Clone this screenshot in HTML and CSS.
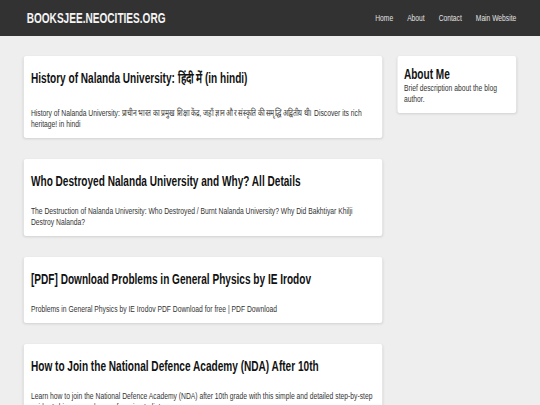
FILE: index.html
```html
<!DOCTYPE html>
<html lang="en">
<head>
  <meta charset="UTF-8" />
  <meta name="viewport" content="width=device-width, initial-scale=1.0"/>
  <title>BooksJEE</title>
  <link rel="stylesheet" href="styles.css">
</head>
<body>
  <header class="site-header">
    <a class="site-title" href="#">BOOKSJEE.NEOCITIES.ORG</a>
    <nav class="site-nav">
      <a href="#">Home</a>
      <a href="#">About</a>
      <a href="#">Contact</a>
      <a href="#">Main Website</a>
    </nav>
  </header>

  <div class="container">
    <main class="posts">
      <article class="post-card">
        <h2>History of Nalanda University: <span lang="hi">हिंदी में</span> (in hindi)</h2>
        <p>History of Nalanda University: <span lang="hi">प्राचीन भारत का प्रमुख शिक्षा केंद्र, जहाँ ज्ञान और संस्कृति की समृद्धि अद्वितीय थी।</span> Discover its rich heritage! in hindi</p>
      </article>
      <article class="post-card">
        <h2>Who Destroyed Nalanda University and Why? All Details</h2>
        <p>The Destruction of Nalanda University: Who Destroyed / Burnt Nalanda University? Why Did Bakhtiyar Khilji Destroy Nalanda?</p>
      </article>
      <article class="post-card">
        <h2>[PDF] Download Problems in General Physics by IE Irodov</h2>
        <p>Problems in General Physics by IE Irodov PDF Download for free | PDF Download</p>
      </article>
      <article class="post-card">
        <h2>How to Join the National Defence Academy (NDA) After 10th</h2>
        <p>Learn how to join the National Defence Academy (NDA) after 10th grade with this simple and detailed step-by-step guide. Achieve your dream of serving India!</p>
      </article>
    </main>

    <aside class="sidebar">
      <div class="widget">
        <h3>About Me</h3>
        <p>Brief description about the blog author.</p>
      </div>
    </aside>
  </div>
</body>
</html>
```

FILE: styles.css
```css
html {
  overflow: hidden;
  background-color: #eeeeee;
}

/* page is laid out 750 wide and squeezed sideways into the window */
body {
  width: 750px;
  margin: 0;
  color: #222;
  font-family: 'Liberation Sans', Arial, sans-serif;
  transform: scaleX(0.72);
  transform-origin: 0 0;
}

a {
  text-decoration: none;
}

.site-header {
  display: flex;
  justify-content: space-between;
  align-items: center;
  height: 36px;
  padding: 0 33px 0 37px;
  background-color: #323232;
}

.site-title {
  color: #f4f4f4;
  font-weight: bold;
  font-size: 14px;
}

.site-nav {
  display: flex;
  gap: 19.5px;
}

.site-nav a {
  color: #e2e2e2;
  font-size: 9.3px;
}

.container {
  display: flex;
  align-items: flex-start;
  gap: 21px;
  padding: 20px 33px;
}

.posts {
  flex: 1;
  display: flex;
  flex-direction: column;
  gap: 21px;
}

.post-card {
  background: #fff;
  border-radius: 3px;
  box-shadow: 0 1px 3px rgba(0, 0, 0, 0.12);
  padding: 14px 10px 8.5px;
}

.post-card h2 {
  margin: 0 0 15.5px;
  font-size: 14px;
  line-height: 17px;
  color: #111;
}

/* devanagari needs a little more room under the title */
.post-card:first-child h2 {
  margin-bottom: 20px;
}

.post-card p {
  margin: 0;
  font-size: 9.4px;
  line-height: 11px;
  color: #333;
}

.sidebar {
  width: 165px;
}

.widget {
  background: #fff;
  border-radius: 3px;
  box-shadow: 0 1px 3px rgba(0, 0, 0, 0.12);
  padding: 10px 9px 9px;
}

.widget h3 {
  margin: 0;
  font-size: 14px;
  line-height: 16px;
  color: #111;
}

.widget p {
  margin: 0;
  font-size: 9.4px;
  line-height: 11px;
  color: #333;
}
```
